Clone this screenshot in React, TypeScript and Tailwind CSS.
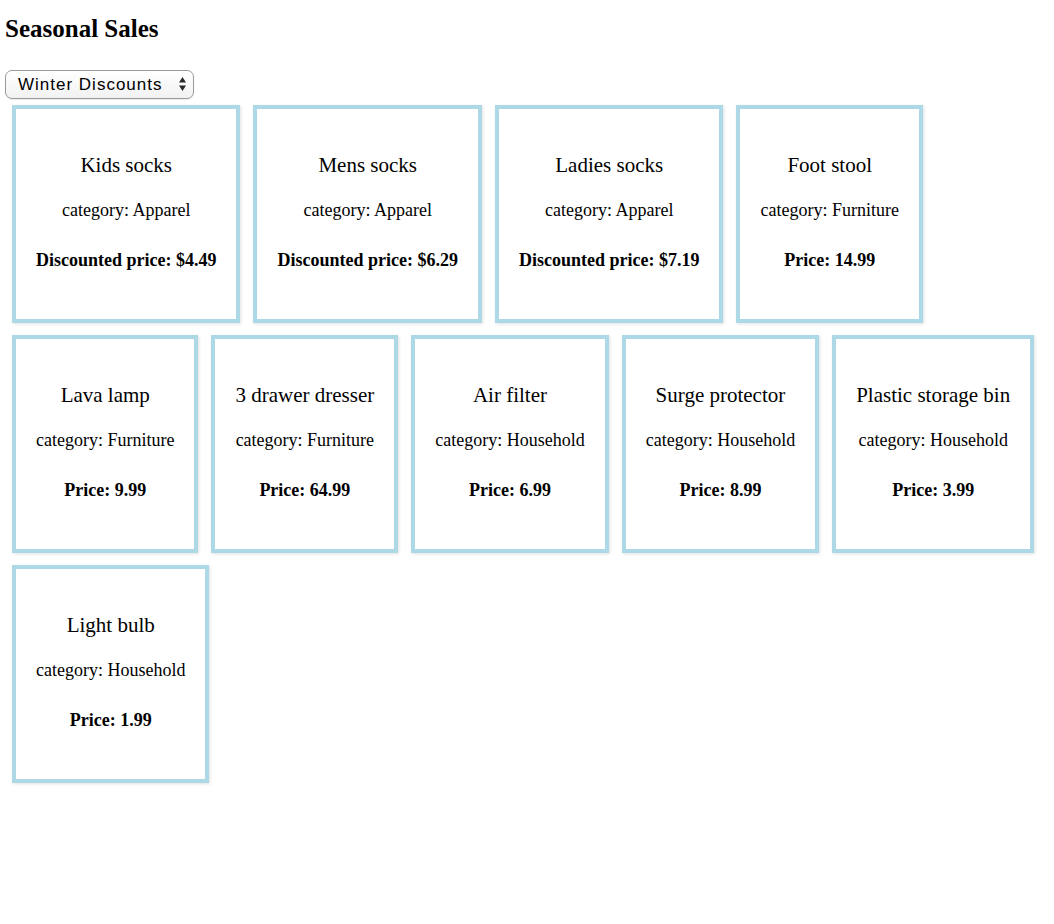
import { useState } from "react";

type Product = {
  name: string;
  category: string;
  price: number;
  discounted?: number;
};

const products: Product[] = [
  { name: "Kids socks", category: "Apparel", price: 4.99, discounted: 4.49 },
  { name: "Mens socks", category: "Apparel", price: 6.99, discounted: 6.29 },
  { name: "Ladies socks", category: "Apparel", price: 7.99, discounted: 7.19 },
  { name: "Foot stool", category: "Furniture", price: 14.99 },
  { name: "Lava lamp", category: "Furniture", price: 9.99 },
  { name: "3 drawer dresser", category: "Furniture", price: 64.99 },
  { name: "Air filter", category: "Household", price: 6.99 },
  { name: "Surge protector", category: "Household", price: 8.99 },
  { name: "Plastic storage bin", category: "Household", price: 3.99 },
  { name: "Light bulb", category: "Household", price: 1.99 },
];

function ProductCard({ product }: { product: Product }) {
  return (
    <div className="box-border h-[218px] border-4 border-[#add8e6] bg-white px-[20px] pt-[44px] text-center text-black shadow-[1px_1px_3px_rgba(0,0,0,0.12)]">
      <div className="text-[21px] leading-[24px] whitespace-nowrap">{product.name}</div>
      <div className="mt-[23px] text-[18px] leading-[20px] whitespace-nowrap">
        category: {product.category}
      </div>
      <div className="mt-[30px] text-[18px] leading-[20px] font-bold whitespace-nowrap">
        {product.discounted !== undefined
          ? `Discounted price: $${product.discounted.toFixed(2)}`
          : `Price: ${product.price.toFixed(2)}`}
      </div>
    </div>
  );
}

export default function App() {
  const [sale, setSale] = useState("winter");

  return (
    <div className="min-h-screen bg-white px-[5px] font-['Liberation_Serif',serif] text-black">
      <h2 className="pt-[15px] text-[25px] leading-[28px] font-bold">Seasonal Sales</h2>

      {/* Sale picker */}
      <div className="relative mt-[27px] inline-block">
        <select
          value={sale}
          onChange={(e) => setSale(e.target.value)}
          className="box-border h-[29px] w-[189px] appearance-none rounded-[7px] border border-[#9a9a9a] bg-gradient-to-b from-white to-[#f2f2f2] pl-[12px] font-['Liberation_Sans',sans-serif] text-[17px] leading-[27px] tracking-[1px] text-black shadow-[0_1px_1px_rgba(0,0,0,0.08)] outline-none"
        >
          <option value="winter">Winter Discounts</option>
          <option value="summer">Summer Discounts</option>
        </select>
        <svg
          className="pointer-events-none absolute top-[6px] right-[7px]"
          width="9"
          height="16"
          viewBox="0 0 9 16"
        >
          <path d="M4.5 1 L8 6.5 L1 6.5 Z" fill="#2a2a2a" />
          <path d="M4.5 15 L8 9.5 L1 9.5 Z" fill="#2a2a2a" />
        </svg>
      </div>

      {/* Product cards */}
      <div className="mt-[6px] flex flex-wrap gap-x-[13px] gap-y-[12px] pl-[7px] pr-[7px]">
        {products.map((p) => (
          <ProductCard key={p.name} product={p} />
        ))}
      </div>
    </div>
  );
}
